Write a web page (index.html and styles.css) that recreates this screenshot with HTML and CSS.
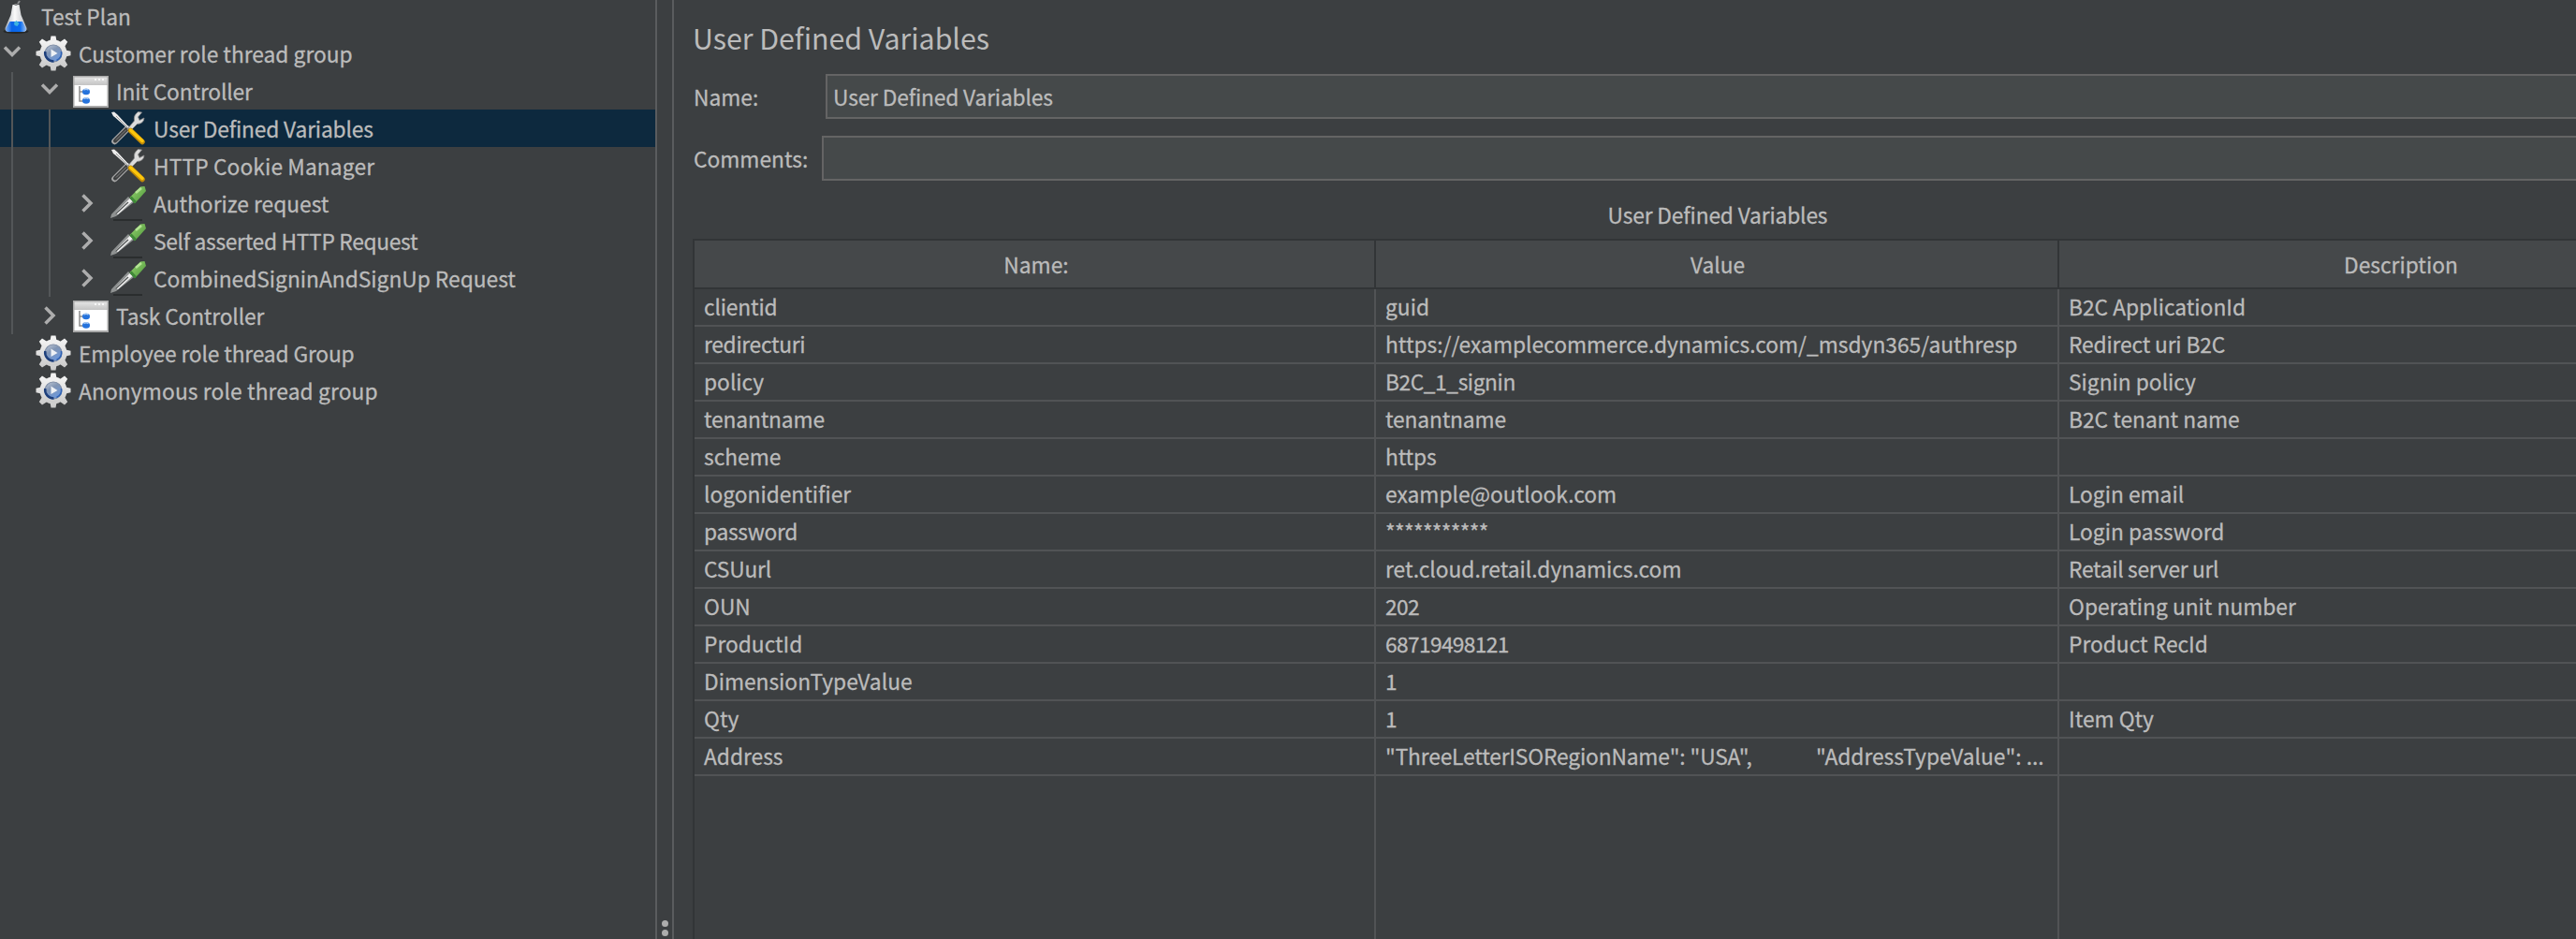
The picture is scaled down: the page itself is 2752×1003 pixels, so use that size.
FILE: index.html
```html
<!DOCTYPE html>
<html lang="en">
<head>
<meta charset="utf-8">
<title>User Defined Variables</title>
<link rel="stylesheet" href="styles.css">
</head>
<body>
<svg class="defs" width="0" height="0" aria-hidden="true">
  <defs>
    <linearGradient id="gGlass" x1="0" x2="1" y1="0" y2="0"><stop offset="0" stop-color="#aeb4ba"/><stop offset=".45" stop-color="#fafafa"/><stop offset="1" stop-color="#b9bdc2"/></linearGradient>
    <linearGradient id="gLiquid" x1="0" x2="1" y1="0" y2="0"><stop offset="0" stop-color="#7fb0f5"/><stop offset=".3" stop-color="#0a63e6"/><stop offset=".7" stop-color="#0a6cf0"/><stop offset="1" stop-color="#9cc0f2"/></linearGradient>
    <linearGradient id="gGear" x1="0" x2="0" y1="0" y2="1"><stop offset="0" stop-color="#f4f4f4"/><stop offset="1" stop-color="#cacaca"/></linearGradient>
    <linearGradient id="gOrb" x1="0" x2=".6" y1="0" y2="1"><stop offset="0" stop-color="#c6cdd8"/><stop offset=".45" stop-color="#8195b4"/><stop offset="1" stop-color="#6c98dc"/></linearGradient>
    <linearGradient id="gBar" x1="0" x2="0" y1="0" y2="1"><stop offset="0" stop-color="#e4e4e4"/><stop offset="1" stop-color="#c4c4c4"/></linearGradient>
    <linearGradient id="gBulb" x1="0" x2="1" y1="0" y2="1"><stop offset="0" stop-color="#9bd873"/><stop offset="1" stop-color="#4a9438"/></linearGradient>
    <symbol id="flask" viewBox="0 0 38 40">
      <ellipse cx="19" cy="36.500" rx="13.500" ry="2.500" fill="#25282a"/>
      <path d="M15.500 8h7l2 11 6 14q.6 4-4.500 4H12q-5 0-4.500-4l6-14z" fill="url(#gGlass)"/>
      <path d="M12.500 26h13.500l4 8q0 3-4 3H12q-4.500 0-4-3z" fill="url(#gLiquid)"/>
      <path d="M17 27l2.500-2 3 3-2 3-3-1z" fill="#3fb4e0"/>
      <path d="M17.500 8h3M21 7l2-3" stroke="#8b8d8f" stroke-width="2"/>
    </symbol>
    <symbol id="gear" viewBox="0 0 38 38">
      <g fill="url(#gGear)">
        <circle cx="19" cy="19" r="14.500"/>
        <path d="M15.500 6l1-5.500h5l1 5.500zM15.500 32l1 5.500h5l1-5.500zM6 15.500L.5 16.800v4.400L6 22.500zM32 15.500l5.500 1.300v4.400L32 22.500z"/>
        <path d="M7 12L3.800 6.800 7 3.600 12.500 7zM26 7l5-3.400 3.200 3.200L31 12zM7 26l-3.200 5.200L7 34.400 12.500 31zM26 31l5 3.400 3.200-3.200L31 26z"/>
      </g>
      <circle cx="19" cy="19" r="9" fill="url(#gOrb)" stroke="#7d8ca5" stroke-width="1.200"/>
      <path d="M10.300 17a9 9 0 0 0 9.200 10.500" fill="none" stroke="#1d3f7c" stroke-width="2.500"/>
      <path d="M27.500 17a9 9 0 0 1-5 9.500" fill="none" stroke="#2f62b5" stroke-width="1.500"/>
      <path d="M16.500 14.500l7 4.500-7 4z" fill="#eef1f5"/>
    </symbol>
    <symbol id="panel" viewBox="0 0 38 34">
      <path d="M0 0h38v34H0z" fill="#a9a9a9"/>
      <path d="M1.500 1.500h35V10h-35z" fill="url(#gBar)"/>
      <path d="M1.500 10h35v22h-35z" fill="#fff"/>
      <path d="M23 4h2M27 4h2M31 4h2" stroke="#f6f6f6" stroke-width="2"/>
      <path d="M7 11v16h4M7 17h4" fill="none" stroke="#8c8c8c" stroke-width="1.500"/>
      <ellipse cx="14" cy="17" rx="4" ry="3.300" fill="#2673dc"/>
      <ellipse cx="14" cy="26.500" rx="4" ry="3.300" fill="#2673dc"/>
      <path d="M11.500 15q2.500-1.500 5 0M11.500 24.500q2.500-1.500 5 0" fill="none" stroke="#a7c9f2" stroke-width="1.500"/>
    </symbol>
    <symbol id="tools" viewBox="0 0 38 38">
      <path d="M4.500 33L18 19.500" stroke="#a8a8a8" stroke-width="6.500" stroke-linecap="round"/>
      <path d="M5 32.500L18 19.500" stroke="#3d3f40" stroke-width="4" stroke-linecap="round"/>
      <path d="M6 31.500L17 20.500" stroke="#858585" stroke-width="1"/>
      <path d="M18 20l7.500-9q-1-6 4-9.500l4 .5-4 5 1.500 3.500 5-2.500q-.5 6-7.500 6.500L21 22z" fill="#dcdcdc" stroke="#8c8c8c" stroke-width=".8"/>
      <path d="M1 2l3-.5 3.500 3L19.500 17.500l-1.500 1.500L5 7.500 3 6z" fill="#ececec"/>
      <path d="M6 6l14 14" stroke="#999" stroke-width="1"/>
      <path d="M21.500 21.500L34 33.500" stroke="#c08a08" stroke-width="5.500" stroke-linecap="round"/>
      <path d="M21.500 21L34 32.500" stroke="#fcc60c" stroke-width="3.500" stroke-linecap="round"/>
    </symbol>
    <symbol id="pipette" viewBox="0 0 38 38">
      <path d="M3 37h31" stroke="#2a2d2e" stroke-width="2"/>
      <path d="M0 35l1-4L19 12l6 6L6 33z" fill="#8f9292"/>
      <path d="M5 30L20.500 14l3 3L8 31z" fill="#f0f0f0"/>
      <path d="M5.500 30.500L19 18" stroke="#555858" stroke-width="1.400"/>
      <path d="M20.500 13l4-4L32 1.500l4.500-.5L38 6l-8 9-4 4z" fill="url(#gBulb)"/>
      <path d="M21.500 12.500l5.500 6" stroke="#3f8a38" stroke-width="3"/>
      <path d="M27 8l6-5" stroke="#b4e394" stroke-width="2.500"/>
    </symbol>
    <symbol id="down" viewBox="0 0 20 20"><path d="M2 4.500l8 8 8-8" fill="none" stroke="#adadad" stroke-width="3.500"/></symbol>
    <symbol id="right" viewBox="0 0 20 20"><path d="M5.500 1.500L14 10l-8.500 8.500" fill="none" stroke="#adadad" stroke-width="3.500"/></symbol>
  </defs>
</svg>

<div class="app">
  <nav class="tree-pane">
    <ul class="tree">
      <li class="node root"><svg class="icon flask"><use href="#flask"/></svg><span class="label">Test Plan</span></li>
      <li class="node"><span class="toggle"><svg><use href="#down"/></svg></span><svg class="icon"><use href="#gear"/></svg><span class="label">Customer role thread group</span></li>
      <li class="node"><i class="guide"></i><span class="toggle"><svg><use href="#down"/></svg></span><svg class="icon panel"><use href="#panel"/></svg><span class="label udv">Init Controller</span></li>
      <li class="node selected"><i class="guide"></i><i class="guide"></i><span class="toggle"></span><svg class="icon"><use href="#tools"/></svg><span class="label udv">User Defined Variables</span></li>
      <li class="node"><i class="guide"></i><i class="guide"></i><span class="toggle"></span><svg class="icon"><use href="#tools"/></svg><span class="label loose">HTTP Cookie Manager</span></li>
      <li class="node"><i class="guide"></i><i class="guide"></i><span class="toggle closed"><svg><use href="#right"/></svg></span><svg class="icon"><use href="#pipette"/></svg><span class="label">Authorize request</span></li>
      <li class="node"><i class="guide"></i><i class="guide"></i><span class="toggle closed"><svg><use href="#right"/></svg></span><svg class="icon"><use href="#pipette"/></svg><span class="label snug">Self asserted HTTP Request</span></li>
      <li class="node"><i class="guide"></i><i class="guide"></i><span class="toggle closed"><svg><use href="#right"/></svg></span><svg class="icon"><use href="#pipette"/></svg><span class="label">CombinedSigninAndSignUp Request</span></li>
      <li class="node"><i class="guide"></i><span class="toggle closed"><svg><use href="#right"/></svg></span><svg class="icon panel"><use href="#panel"/></svg><span class="label udv">Task Controller</span></li>
      <li class="node"><span class="toggle"></span><svg class="icon"><use href="#gear"/></svg><span class="label udv">Employee role thread Group</span></li>
      <li class="node"><span class="toggle"></span><svg class="icon"><use href="#gear"/></svg><span class="label loose">Anonymous role thread group</span></li>
    </ul>
  </nav>

  <div class="divider"><i class="dot"></i><i class="dot"></i><i class="dot"></i></div>

  <main class="editor">
    <h1 class="title">User Defined Variables</h1>
    <div class="field"><span class="field-label name">Name:</span><div class="input udv">User Defined Variables</div></div>
    <div class="field"><span class="field-label comments">Comments:</span><div class="input"></div></div>
    <h2 class="caption udv">User Defined Variables</h2>
    <table class="vars">
      <colgroup><col><col><col></colgroup>
      <thead><tr><th>Name:</th><th>Value</th><th>Description</th></tr></thead>
      <tbody>
        <tr><td class="udv">clientid</td><td>guid</td><td>B2C ApplicationId</td></tr>
        <tr><td class="snug">redirecturi</td><td>https://examplecommerce.dynamics.com/_msdyn365/authresp</td><td class="udv">Redirect uri B2C</td></tr>
        <tr><td>policy</td><td class="close">B2C_1_signin</td><td>Signin policy</td></tr>
        <tr><td class="udv">tenantname</td><td class="udv">tenantname</td><td>B2C tenant name</td></tr>
        <tr><td>scheme</td><td class="udv">https</td><td></td></tr>
        <tr><td>logonidentifier</td><td>example@outlook.com</td><td>Login email</td></tr>
        <tr><td class="snug">password</td><td class="tight">***********</td><td>Login password</td></tr>
        <tr><td class="udv">CSUurl</td><td>ret.cloud.retail.dynamics.com</td><td class="snug">Retail server url</td></tr>
        <tr><td>OUN</td><td class="tight">202</td><td>Operating unit number</td></tr>
        <tr><td>ProductId</td><td class="tight">68719498121</td><td>Product RecId</td></tr>
        <tr><td>DimensionTypeValue</td><td>1</td><td></td></tr>
        <tr><td>Qty</td><td>1</td><td>Item Qty</td></tr>
        <tr><td>Address</td><td><span class="pair udv">"ThreeLetterISORegionName": "USA",</span><span>"AddressTypeValue": ...</span></td><td></td></tr>
        <tr class="filler"><td></td><td></td><td></td></tr>
      </tbody>
    </table>
  </main>
</div>
</body>
</html>
```
FILE: styles.css
```css
* { box-sizing: border-box; }

body {
  margin: 0;
  height: 1003px;
  overflow: hidden;
  background: #3c3f41;
  color: #bbbbbb;
  font: 22.75px/40px "Noto Sans CJK SC", "Noto Sans", sans-serif;
  -webkit-text-stroke: 0.3px #bbbbbb;
}

.defs { position: absolute; }

.app { display: flex; height: 1003px; }

/* Tracking steps */
.loose { letter-spacing: 0.12px; }
.udv { letter-spacing: -0.15px; }
.snug { letter-spacing: -0.3px; }
.close { letter-spacing: -0.42px; }
.tight { letter-spacing: -0.65px; }

/* Tree */
.tree-pane { flex: 0 0 700px; overflow: hidden; }
.tree { list-style: none; margin: -3px 0 0; padding: 0; }
.node { display: flex; height: 40px; align-items: center; white-space: nowrap; }
.node.root { margin-left: -2px; }
.node.selected { background: #0d293e; }
.label { padding-top: 2px; }
.guide { flex: 0 0 40px; height: 40px; padding-left: 12px; }
.guide::before { content: ""; display: block; width: 2px; height: 40px; background: #535658; }
.toggle { flex: 0 0 38px; height: 40px; padding: 9px 0 0 3px; }
.toggle svg { display: block; width: 20px; height: 20px; }
.toggle.closed { padding-top: 10px; }
.icon { flex: 0 0 38px; width: 38px; height: 38px; margin-right: 8px; }
.icon.flask { height: 40px; }
.icon.panel { height: 34px; margin-top: 2px; }

/* Split divider */
.divider {
  flex: 0 0 20px;
  display: flex;
  flex-direction: column;
  align-items: center;
  gap: 3px;
  padding-top: 983px;
  border: solid #5a5c5e;
  border-width: 0 2px;
  overflow: hidden;
}
.dot { flex: 0 0 7px; width: 7px; height: 7px; border-radius: 50%; background: #adadad; }

/* Editor */
.editor { flex: 1; min-width: 0; padding-left: 20px; overflow: hidden; }
.title { margin: 20px 0 19px; font-size: 30.4px; font-weight: 400; line-height: 40px; letter-spacing: -0.05px; -webkit-text-stroke-width: 0; }
.field { display: flex; height: 48px; margin-bottom: 18px; line-height: 50px; }
.field-label { flex: none; padding-left: 1px; }
.field-label.name { width: 142px; }
.field-label.comments { width: 138px; }
.input {
  flex: 1;
  padding-left: 6px;
  line-height: 46px;
  background: #45494a;
  border: 2px solid #646464;
  border-right: 0;
}
.caption { width: 2190px; margin: -1px 0 5px; font-size: inherit; font-weight: 400; line-height: 40px; text-align: center; }

.vars {
  table-layout: fixed;
  width: 2190px;
  height: 748px;
  border-collapse: separate;
  border-spacing: 0;
  border-top: 2px solid #323537;
  border-left: 2px solid #323537;
}
.vars col { width: 730px; }
.vars col:first-child { width: 728px; }
.vars th {
  height: 52px;
  padding: 2px 0 0 2px;
  font-weight: 400;
  line-height: 48px;
  vertical-align: bottom;
  background: #45484a;
  border: solid #323537;
  border-width: 0 2px 2px 0;
}
.vars th:first-child { padding-left: 4px; }
.vars td {
  height: 40px;
  padding: 0 0 0 10px;
  line-height: 38px;
  white-space: nowrap;
  border: solid #515355;
  border-width: 0 2px 2px 0;
}
.vars .filler td { height: auto; border-bottom: 0; }
.pair { display: inline-block; width: 460px; }
```
